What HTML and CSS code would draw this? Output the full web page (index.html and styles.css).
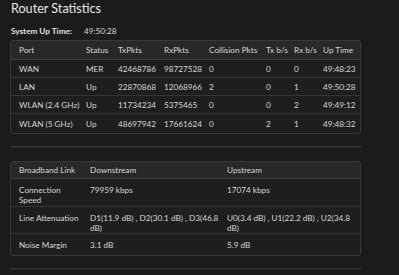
FILE: index.html
```html
<!DOCTYPE html>
<html>
<head>
<meta charset="utf-8">
<link rel="stylesheet" href="styles.css">
</head>
<body>
<div class="page">
  <h1 class="title">Router Statistics</h1>
  <div class="uptime"><span class="uptime-label">System Up Time:</span><span class="uptime-value">49:50:28</span></div>
  <div class="box box-ports">
    <table class="stats ports">
      <colgroup>
        <col class="c1"><col class="c2"><col class="c3"><col class="c4"><col class="c5"><col class="c6"><col class="c7"><col class="c8">
      </colgroup>
      <thead>
        <tr><th>Port</th><th>Status</th><th>TxPkts</th><th>RxPkts</th><th>Collision Pkts</th><th>Tx b/s</th><th>Rx b/s</th><th>Up Time</th></tr>
      </thead>
      <tbody>
        <tr><td>WAN</td><td>MER</td><td>42468786</td><td>98727528</td><td>0</td><td>0</td><td>0</td><td>49:48:23</td></tr>
        <tr><td>LAN</td><td>Up</td><td>22870868</td><td>12068966</td><td>2</td><td>0</td><td>1</td><td>49:50:28</td></tr>
        <tr><td>WLAN (2.4 GHz)</td><td>Up</td><td>11734234</td><td>5375465</td><td>0</td><td>0</td><td>2</td><td>49:49:12</td></tr>
        <tr><td>WLAN (5 GHz)</td><td>Up</td><td>48697942</td><td>17661624</td><td>0</td><td>2</td><td>1</td><td>49:48:32</td></tr>
      </tbody>
    </table>
  </div>
  <div class="sep sep-1"></div>
  <div class="box box-link">
    <table class="stats link">
      <colgroup>
        <col class="l1"><col class="l2"><col class="l3">
      </colgroup>
      <thead>
        <tr><th>Broadband Link</th><th>Downstream</th><th>Upstream</th></tr>
      </thead>
      <tbody>
        <tr class="r-speed"><td>Connection Speed</td><td>79959 kbps</td><td>17074 kbps</td></tr>
        <tr class="r-atten"><td>Line Attenuation</td><td>D1(11.9 dB) , D2(30.1 dB) , D3(46.8 dB)</td><td>U0(3.4 dB) , U1(22.2 dB) , U2(34.8 dB)</td></tr>
        <tr class="r-noise"><td>Noise Margin</td><td>3.1 dB</td><td>5.9 dB</td></tr>
      </tbody>
    </table>
  </div>
  <div class="sep sep-2"></div>
</div>
</body>
</html>
```

FILE: styles.css
```css
html, body {
  margin: 0;
  padding: 0;
  background: #1b1b1b;
}
body {
  font-family: Lato, "Open Sans", sans-serif;
  color: #d6d6d6;
  width: 399px;
  height: 275px;
  overflow: hidden;
}
.page {
  padding: 0 0 0 10px;
  width: 351px;
}
.title {
  margin: 0;
  padding-left: 1px;
  font-size: 12.6px;
  font-weight: 400;
  line-height: 17px;
  color: #e6e6e6;
}
.uptime {
  display: flex;
  align-items: center;
  height: 12px;
  margin-top: 8px;
  padding-left: 1px;
  font-size: 8.2px;
  color: #e0e0e0;
}
.uptime-label {
  font-weight: 700;
  width: 73px;
}
.uptime-value {
  color: #d6d6d6;
}
.box {
  border: 1px solid #393939;
  border-radius: 3px;
  overflow: hidden;
  background: #1e1e1e;
}
.box-ports {
  margin-top: 3px;
}
.stats {
  width: 100%;
  border-collapse: collapse;
  table-layout: fixed;
  font-size: 8.2px;
}
.stats th, .stats td {
  text-align: left;
  padding: 0 0 0 8px;
  white-space: nowrap;
  font-weight: 400;
}
.stats thead th {
  background: #282828;
  color: #d6d6d6;
  height: 18px;
  border-bottom: 1px solid #3a3a3a;
}
.ports tbody td {
  height: 17px;
  border-bottom: 1px solid #353535;
}
.ports tbody tr:last-child td {
  border-bottom: none;
  height: 19px;
}
.c1 { width: 67px; }
.c2 { width: 32px; }
.c3 { width: 46px; }
.c4 { width: 45px; }
.c5 { width: 57px; }
.c6 { width: 28px; }
.c7 { width: 29px; }
.c8 { width: 45px; }
.sep {
  height: 0;
  border-top: 1px solid #353535;
  border-bottom: 1px solid #262626;
}
.sep-1 {
  margin-top: 12px;
}
.box-link {
  margin-top: 13px;
}
.l1 { width: 71px; }
.l2 { width: 137px; }
.l3 { width: 141px; }
.link thead th {
  height: 16px;
}
.link tbody td {
  white-space: normal;
  vertical-align: top;
  line-height: 10px;
  border-bottom: 1px solid #353535;
}
.link .r-speed td {
  padding-top: 6px;
  height: 21px;
}
.link .r-atten td {
  padding-top: 6px;
  height: 20px;
}
.link .r-noise td {
  padding-top: 6px;
  height: 15px;
  border-bottom: none;
}
.sep-2 {
  margin-top: 12px;
}
```
